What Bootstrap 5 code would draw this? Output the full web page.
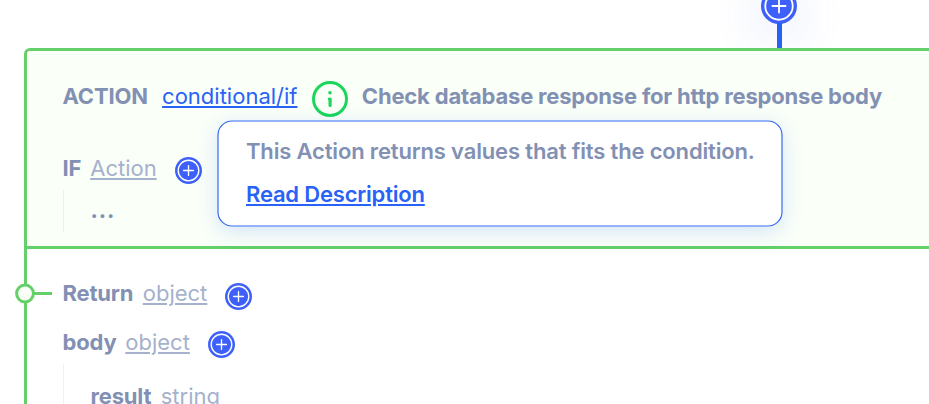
<!DOCTYPE html>
<html lang="en">
<head>
<meta charset="utf-8">
<meta name="viewport" content="width=device-width, initial-scale=1">
<title>Action editor</title>
<link href="https://cdn.jsdelivr.net/npm/bootstrap@5.3.0/dist/css/bootstrap.min.css" rel="stylesheet">
<style>
  body { font-family: Inter, "Liberation Sans", sans-serif; font-size: 22px; line-height: 28px; color: #8290b3; background: #fff; height: 404px; }
  .connector-zone { height: 48px; overflow: hidden; }
  .connector { width: 36px; margin-left: 761px; }
  .connector-glow { width: 36px; height: 36px; margin-top: -12px; flex: none; border-radius: 50%; box-shadow: 0 10px 50px 4px rgba(64,97,250,.14); }
  .connector-glow svg { display: block; }
  .connector-stem { width: 5px; height: 25px; margin-top: -1px; background: #2762f5; }
  .flow-frame { margin-left: 24px; height: 356px; overflow: hidden; border: solid #63d069; border-width: 3px 0 0 3px; border-top-left-radius: 6px; }
  .action-panel { height: 198px; background: #fafff8; border-bottom: 3px solid #63d069; border-top-left-radius: 3px; padding: 31px 0 0 36px; }
  .line { height: 28px; white-space: nowrap; }
  .line svg { flex: none; }
  .strong-text { font-weight: 700; letter-spacing: -.19px; }
  .line > .strong-text:first-child { margin-left: -.5px; }
  .type-link { color: #a5b1cd; text-decoration: underline; text-decoration-thickness: 2px; text-underline-offset: 2px; }
  .main-link { color: #2962f6; text-decoration: underline; text-decoration-thickness: 2px; text-underline-offset: 2px; }
  .nest { border-left: 1px solid #eceff5; padding-left: 27px; }
  .t-cond { margin-left: 14.4px; }
  .info { margin: -1px 0 0 14.4px; }
  .t-check { margin-left: 14px; }
  .l-if .type-link { margin-left: 9px; }
  .l-if { margin-top: 44px; }
  .l-if svg { margin: 3px 0 0 18px; }
  .n-if { height: 42px; margin-top: 8px; padding: 6px 0 0 26.4px; letter-spacing: .9px; }
  .l-return .type-link { margin-left: 9.5px; }
  .l-return svg { margin: 4px 0 0 17.6px; }
  .l-body { margin-top: 21px; }
  .l-body .type-link { margin-left: 8.8px; }
  .l-body svg { margin: 3px 0 0 18px; }
  .n-body { margin-top: 8px; padding-top: 18px; height: 60px; }
  .t-string { color: #a5b1cd; margin-left: 9.5px; }
  .return-panel { padding: 30px 0 0 36px; }
  .tip { left: 217px; top: 120px; width: 566px; height: 107px; border-radius: 15px; box-shadow: 0 5px 20px rgba(41,98,246,.17); padding: 17px 0 0 29px; font-weight: 600; letter-spacing: -.16px; }
  .tip-outline { left: 0; top: 0; }
  .tip-link-line { margin-top: 15px; }
  .tip-link-line .main-link { letter-spacing: -.19px; }
  .node { left: 15px; top: 283px; }
</style>
</head>
<body class="position-relative overflow-hidden m-0">
<svg class="d-none" aria-hidden="true">
  <symbol id="plus" viewBox="0 0 27 27">
    <circle cx="13.5" cy="13.5" r="13.5" fill="#3e60fa"/>
    <circle cx="13.5" cy="13.5" r="10.3" fill="none" stroke="#fff" stroke-width="1.35"/>
    <path d="M8.6 13.5h9.8M13.5 8.6v9.8" stroke="#fff" stroke-width="1.35" stroke-linecap="round"/>
  </symbol>
</svg>

<div class="connector-zone">
  <div class="connector d-flex flex-column align-items-center">
    <div class="connector-glow"><svg width="36" height="36"><use href="#plus"/></svg></div>
    <div class="connector-stem"></div>
  </div>
</div>

<main class="flow-frame">
  <section class="action-panel">
    <div class="line d-flex">
      <span class="strong-text">ACTION</span>
      <a href="#" class="main-link t-cond">conditional/if</a>
      <svg class="info" width="36" height="36" viewBox="0 0 36 36"><circle cx="18" cy="18" r="16.5" fill="none" stroke="#1bd65b" stroke-width="3"/><circle cx="18" cy="11.7" r="1.8" fill="#1bd65b"/><path d="M17.4 18.1h.7v6.3" fill="none" stroke="#1bd65b" stroke-width="3.2" stroke-linecap="round" stroke-linejoin="round"/></svg>
      <span class="strong-text t-check">Check database response for http response body</span>
    </div>
    <div class="line d-flex l-if">
      <span class="strong-text">IF</span>
      <a href="#" class="type-link">Action</a>
      <svg width="27" height="27"><use href="#plus"/></svg>
    </div>
    <div class="nest n-if fw-bold">...</div>
  </section>
  <section class="return-panel">
    <div class="line d-flex l-return">
      <span class="strong-text">Return</span>
      <a href="#" class="type-link">object</a>
      <svg width="27" height="27"><use href="#plus"/></svg>
    </div>
    <div class="line d-flex l-body">
      <span class="strong-text">body</span>
      <a href="#" class="type-link">object</a>
      <svg width="27" height="27"><use href="#plus"/></svg>
    </div>
    <div class="nest n-body">
      <div class="line d-flex"><span class="strong-text">result</span><span class="t-string">string</span></div>
    </div>
  </section>
</main>
<aside class="tip position-absolute">
  <svg class="tip-outline position-absolute" width="566" height="107" aria-hidden="true"><rect x="1" y="1" width="564" height="105" rx="14" fill="#fff" stroke="#2f66f6" stroke-width="1.2"/></svg>
  <div class="line position-relative">This Action returns values that fits the condition.</div>
  <div class="line tip-link-line position-relative"><a href="#" class="main-link">Read Description</a></div>
</aside>
<svg class="node position-absolute" width="37" height="21"><path d="M18 10.5h19" stroke="#63d069" stroke-width="3"/><circle cx="10" cy="10.5" r="8.4" fill="#f9fff7" stroke="#63d069" stroke-width="3"/></svg>
<script src="https://cdn.jsdelivr.net/npm/bootstrap@5.3.0/dist/js/bootstrap.bundle.min.js"></script>
</body>
</html>
